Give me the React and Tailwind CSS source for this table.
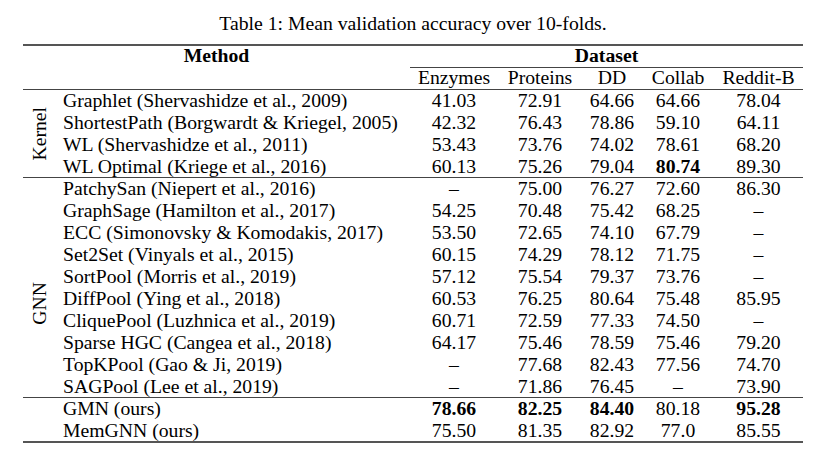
const kernelRows = [
  { name: 'Graphlet (Shervashidze et al., 2009)', vals: ['41.03', '72.91', '64.66', '64.66', '78.04'] },
  { name: 'ShortestPath (Borgwardt & Kriegel, 2005)', vals: ['42.32', '76.43', '78.86', '59.10', '64.11'] },
  { name: 'WL (Shervashidze et al., 2011)', vals: ['53.43', '73.76', '74.02', '78.61', '68.20'] },
  { name: 'WL Optimal (Kriege et al., 2016)', vals: ['60.13', '75.26', '79.04', '80.74', '89.30'], bold: [3] },
]

const gnnRows = [
  { name: 'PatchySan (Niepert et al., 2016)', vals: ['–', '75.00', '76.27', '72.60', '86.30'] },
  { name: 'GraphSage (Hamilton et al., 2017)', vals: ['54.25', '70.48', '75.42', '68.25', '–'] },
  { name: 'ECC (Simonovsky & Komodakis, 2017)', vals: ['53.50', '72.65', '74.10', '67.79', '–'] },
  { name: 'Set2Set (Vinyals et al., 2015)', vals: ['60.15', '74.29', '78.12', '71.75', '–'] },
  { name: 'SortPool (Morris et al., 2019)', vals: ['57.12', '75.54', '79.37', '73.76', '–'] },
  { name: 'DiffPool (Ying et al., 2018)', vals: ['60.53', '76.25', '80.64', '75.48', '85.95'] },
  { name: 'CliquePool (Luzhnica et al., 2019)', vals: ['60.71', '72.59', '77.33', '74.50', '–'] },
  { name: 'Sparse HGC (Cangea et al., 2018)', vals: ['64.17', '75.46', '78.59', '75.46', '79.20'] },
  { name: 'TopKPool (Gao & Ji, 2019)', vals: ['–', '77.68', '82.43', '77.56', '74.70'] },
  { name: 'SAGPool (Lee et al., 2019)', vals: ['–', '71.86', '76.45', '–', '73.90'] },
]

const oursRows = [
  { name: 'GMN (ours)', vals: ['78.66', '82.25', '84.40', '80.18', '95.28'], bold: [0, 1, 2, 4] },
  { name: 'MemGNN (ours)', vals: ['75.50', '81.35', '82.92', '77.0', '85.55'] },
]

const cols = ['Enzymes', 'Proteins', 'DD', 'Collab', 'Reddit-B']

function Row({ row, first }) {
  return (
    <div
      className={
        'grid grid-cols-[347px_88px_84px_60px_72px_89px] whitespace-nowrap ' +
        (first ? 'h-[21px] leading-[21px]' : 'h-[22px] leading-[22px]')
      }
    >
      <div>{row.name}</div>
      {row.vals.map((v, i) => (
        <div key={i} className={'text-center ' + (row.bold && row.bold.includes(i) ? 'font-bold' : '')}>
          {v}
        </div>
      ))}
    </div>
  )
}

function Section({ label, rows, labelPad = '' }) {
  return (
    <div className="flex border-t border-[#444]">
      <div className={'flex w-[40px] items-center justify-center pr-[6px] ' + labelPad}>
        {label && <span className="rotate-180 leading-none [writing-mode:vertical-rl]">{label}</span>}
      </div>
      <div className="w-[740px]">
        {rows.map((r, i) => (
          <Row key={r.name} row={r} first={i === 0} />
        ))}
      </div>
    </div>
  )
}

export default function App() {
  return (
    <div className="h-[463px] w-[833px] bg-white text-[19.7px] text-black font-['Liberation_Serif',serif]">
      <div className="ml-[23px] w-[780px]">
        <div className="mb-[10px] pt-[12px] text-center leading-[22px]">
          Table 1: Mean validation accuracy over 10-folds.
        </div>
        <div className="border-t-2 border-[#555]">
          <div className="flex h-[21px] font-bold leading-[19px]">
            <div className="w-[387px] text-center">Method</div>
            <div className="w-[393px] text-center">Dataset</div>
          </div>
          <div className="flex h-[22px]">
            <div className="w-[387px]" />
            <div className="grid w-[393px] grid-cols-[88px_84px_60px_72px_89px] border-t border-[#444] leading-[19px]">
              {cols.map((c) => (
                <div key={c} className="text-center">
                  {c}
                </div>
              ))}
            </div>
          </div>
          <Section label="Kernel" rows={kernelRows} />
          <Section label="GNN" rows={gnnRows} labelPad="pt-[32px]" />
          <Section rows={oursRows} />
          <div className="border-t-2 border-[#555]" />
        </div>
      </div>
    </div>
  )
}
